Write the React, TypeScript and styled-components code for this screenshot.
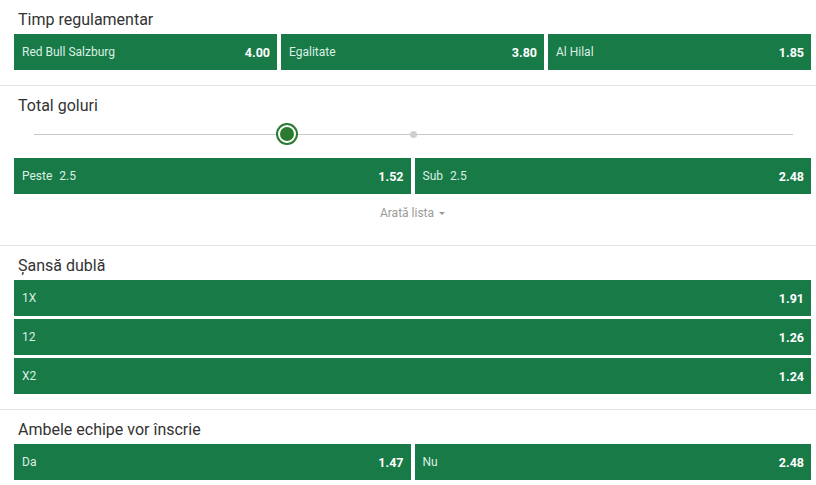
import React from "react";
import styled, { createGlobalStyle } from "styled-components";

const Global = createGlobalStyle`
  html, body { margin: 0; padding: 0; background: #fff; }
  body { font-family: Roboto, "Liberation Sans", Arial, sans-serif; }
`;

const Page = styled.div`
  width: 816px;
  background: #fff;
`;

const Section = styled.section`
  padding: 10px 5px 15px 14px;
  border-bottom: 1px solid #e3e3e3;
  &:last-child { border-bottom: none; }
`;

const Title = styled.h3`
  margin: 0 0 4px 4px;
  font-size: 16px;
  line-height: 20px;
  font-weight: 400;
  color: #333;
`;

const Grid = styled.div<{ $cols: number }>`
  display: grid;
  grid-template-columns: repeat(${(p) => p.$cols}, 1fr);
  gap: 4px;
`;

const Stack = styled.div`
  display: flex;
  flex-direction: column;
  gap: 3px;
`;

const Odd = styled.button`
  all: unset;
  box-sizing: border-box;
  height: 36px;
  background: #187a47;
  display: flex;
  align-items: center;
  justify-content: space-between;
  padding: 0 7px 0 8px;
  cursor: pointer;
  font-family: Roboto, "Liberation Sans", Arial, sans-serif;
`;

const Label = styled.span`
  font-size: 12px;
  color: #dcefe3;
  display: flex;
  gap: 7px;
`;

const Value = styled.span`
  font-size: 12.5px;
  font-weight: 700;
  color: #fff;
`;

const SliderWrap = styled.div`
  height: 34px;
  margin: 0 18px 4px 20px;
  position: relative;
`;

const Track = styled.div`
  position: absolute;
  left: 0;
  right: 0;
  top: 14px;
  height: 1px;
  background: #c8c8c8;
`;

const Thumb = styled.div`
  position: absolute;
  top: 3px;
  width: 22px;
  height: 22px;
  margin-left: -11px;
  box-sizing: border-box;
  border-radius: 50%;
  border: 2px solid #2a7a30;
  background: #fff;
  display: flex;
  align-items: center;
  justify-content: center;
  &::after {
    content: "";
    width: 14px;
    height: 14px;
    border-radius: 50%;
    background: #2a7a30;
  }
`;

const Dot = styled.div`
  position: absolute;
  top: 11px;
  width: 7px;
  height: 7px;
  margin-left: -3.5px;
  border-radius: 50%;
  background: #cfcfcf;
`;

const More = styled.div`
  padding: 10px 0 8px;
  text-align: center;
  font-size: 12px;
  line-height: 18px;
  color: #9a9a9a;
  display: flex;
  justify-content: center;
  align-items: center;
  gap: 5px;
`;

const Caret = styled.span`
  width: 0;
  height: 0;
  border-left: 3px solid transparent;
  border-right: 3px solid transparent;
  border-top: 3px solid #9a9a9a;
  margin-top: 1px;
`;

const OddBtn = ({ label, sub, value }: { label: string; sub?: string; value: string }) => (
  <Odd>
    <Label>
      <span>{label}</span>
      {sub && <span>{sub}</span>}
    </Label>
    <Value>{value}</Value>
  </Odd>
);

export default function App() {
  return (
    <Page>
      <Global />
      <Section>
        <Title>Timp regulamentar</Title>
        <Grid $cols={3}>
          <OddBtn label="Red Bull Salzburg" value="4.00" />
          <OddBtn label="Egalitate" value="3.80" />
          <OddBtn label="Al Hilal" value="1.85" />
        </Grid>
      </Section>
      <Section>
        <Title>Total goluri</Title>
        <SliderWrap>
          <Track />
          <Dot style={{ left: "50%" }} />
          <Thumb style={{ left: "33.3%" }} />
        </SliderWrap>
        <Grid $cols={2}>
          <OddBtn label="Peste" sub="2.5" value="1.52" />
          <OddBtn label="Sub" sub="2.5" value="2.48" />
        </Grid>
        <More>
          Arată lista <Caret />
        </More>
      </Section>
      <Section>
        <Title>Șansă dublă</Title>
        <Stack>
          <OddBtn label="1X" value="1.91" />
          <OddBtn label="12" value="1.26" />
          <OddBtn label="X2" value="1.24" />
        </Stack>
      </Section>
      <Section>
        <Title>Ambele echipe vor înscrie</Title>
        <Grid $cols={2}>
          <OddBtn label="Da" value="1.47" />
          <OddBtn label="Nu" value="2.48" />
        </Grid>
      </Section>
    </Page>
  );
}
